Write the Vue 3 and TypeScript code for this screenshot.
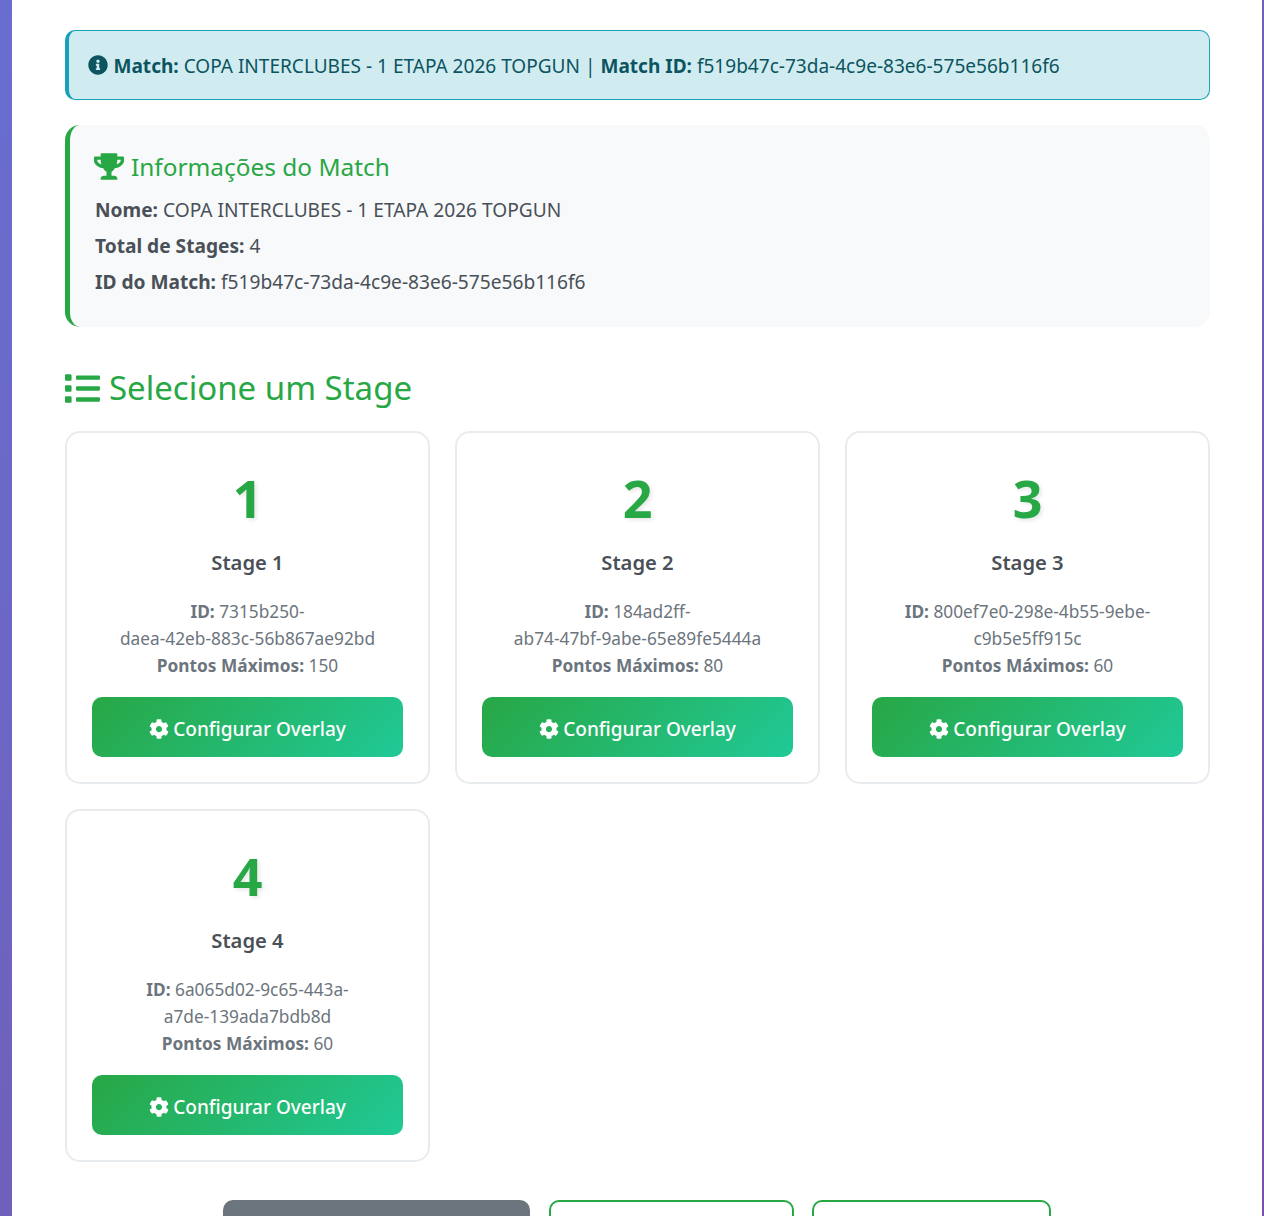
<script setup lang="ts">
interface Stage { n: number; idHead: string; idTail: string; pts: number }
const stages: Stage[] = [
  { n: 1, idHead: '7315b250-', idTail: 'daea-42eb-883c-56b867ae92bd', pts: 150 },
  { n: 2, idHead: '184ad2ff-', idTail: 'ab74-47bf-9abe-65e89fe5444a', pts: 80 },
  { n: 3, idHead: '800ef7e0-298e-4b55-9ebe-', idTail: 'c9b5e5ff915c', pts: 60 },
  { n: 4, idHead: '6a065d02-9c65-443a-', idTail: 'a7de-139ada7bdb8d', pts: 60 },
]
const cog = 'M487.4 315.7l-42.6-24.6c4.3-23.2 4.3-47 0-70.2l42.6-24.6c4.9-2.8 7.1-8.6 5.5-14-11.1-35.6-30-67.8-54.7-94.6-3.8-4.1-10-5.1-14.8-2.3L380.8 110c-17.9-15.4-38.5-27.3-60.8-35.1V25.8c0-5.6-3.9-10.5-9.4-11.7-36.7-8.2-74.3-7.8-109.2 0-5.5 1.2-9.4 6.1-9.4 11.7V75c-22.2 7.9-42.8 19.8-60.8 35.1L88.7 85.5c-4.9-2.8-11-1.9-14.8 2.3-24.7 26.7-43.6 58.9-54.7 94.6-1.7 5.4.6 11.2 5.5 14L67.3 221c-4.3 23.2-4.3 47 0 70.2l-42.6 24.6c-4.9 2.8-7.1 8.6-5.5 14 11.1 35.6 30 67.8 54.7 94.6 3.8 4.1 10 5.1 14.8 2.3l42.6-24.6c17.9 15.4 38.5 27.3 60.8 35.1v49.2c0 5.6 3.9 10.5 9.4 11.7 36.7 8.2 74.3 7.8 109.2 0 5.5-1.2 9.4-6.1 9.4-11.7v-49.2c22.2-7.9 42.8-19.8 60.8-35.1l42.6 24.6c4.9 2.8 11 1.9 14.8-2.3 24.7-26.7 43.6-58.9 54.7-94.6 1.5-5.5-.7-11.3-5.6-14.1zM256 336c-44.1 0-80-35.9-80-80s35.9-80 80-80 80 35.9 80 80-35.9 80-80 80z'
</script>

<template>
  <main class="container">
    <div class="alert">
      <svg class="ico-info" viewBox="0 0 512 512"><path fill="currentColor" d="M256 8C119.043 8 8 119.083 8 256c0 136.997 111.043 248 248 248s248-111.003 248-248C504 119.083 392.957 8 256 8zm0 110c23.196 0 42 18.804 42 42s-18.804 42-42 42-42-18.804-42-42 18.804-42 42-42zm56 254c0 6.627-5.373 12-12 12h-88c-6.627 0-12-5.373-12-12v-24c0-6.627 5.373-12 12-12h12v-64h-12c-6.627 0-12-5.373-12-12v-24c0-6.627 5.373-12 12-12h64c6.627 0 12 5.373 12 12v100h12c6.627 0 12 5.373 12 12v24z"/></svg>
      <span class="alert-text"><strong>Match:</strong> COPA INTERCLUBES - 1 ETAPA 2026 TOPGUN | <strong>Match ID:</strong> f519b47c-73da-4c9e-83e6-575e56b116f6</span>
    </div>

    <section class="info">
      <h3 class="info-title">
        <svg class="ico-trophy" viewBox="0 0 576 512"><path fill="currentColor" d="M552 64H448V24c0-13.3-10.7-24-24-24H152c-13.3 0-24 10.7-24 24v40H24C10.7 64 0 74.7 0 88v56c0 35.7 22.5 72.4 61.9 100.7 31.5 22.7 69.8 37.1 110 41.7C203.3 338.5 240 360 240 360v72h-48c-35.3 0-64 20.7-64 56v12c0 6.6 5.4 12 12 12h296c6.6 0 12-5.4 12-12v-12c0-35.3-28.7-56-64-56h-48v-72s36.7-21.5 68.1-73.6c40.3-4.6 78.6-19 110-41.7 39.3-28.3 61.9-65 61.9-100.7V88c0-13.3-10.7-24-24-24zM99.3 192.8C74.9 175.2 64 155.6 64 144v-16h64.2c1 32.6 5.8 61.2 12.8 86.2-15.1-5.2-29.2-12.4-41.7-21.4zM512 144c0 16.1-17.7 36.1-35.3 48.8-12.5 9-26.7 16.2-41.8 21.4 7-25 11.8-53.6 12.8-86.2H512v16z"/></svg>
        Informações do Match
      </h3>
      <p><strong>Nome:</strong> COPA INTERCLUBES - 1 ETAPA 2026 TOPGUN</p>
      <p><strong>Total de Stages:</strong> 4</p>
      <p><strong>ID do Match:</strong> f519b47c-73da-4c9e-83e6-575e56b116f6</p>
    </section>

    <h2 class="heading">
      <svg class="ico-list" viewBox="0 0 512 512"><path fill="currentColor" d="M80 368H16a16 16 0 0 0-16 16v64a16 16 0 0 0 16 16h64a16 16 0 0 0 16-16v-64a16 16 0 0 0-16-16zm0-320H16A16 16 0 0 0 0 64v64a16 16 0 0 0 16 16h64a16 16 0 0 0 16-16V64a16 16 0 0 0-16-16zm0 160H16a16 16 0 0 0-16 16v64a16 16 0 0 0 16 16h64a16 16 0 0 0 16-16v-64a16 16 0 0 0-16-16zm416 176H176a16 16 0 0 0-16 16v32a16 16 0 0 0 16 16h320a16 16 0 0 0 16-16v-32a16 16 0 0 0-16-16zm0-320H176a16 16 0 0 0-16 16v32a16 16 0 0 0 16 16h320a16 16 0 0 0 16-16V80a16 16 0 0 0-16-16zm0 160H176a16 16 0 0 0-16 16v32a16 16 0 0 0 16 16h320a16 16 0 0 0 16-16v-32a16 16 0 0 0-16-16z"/></svg>
      Selecione um Stage
    </h2>

    <div class="grid">
      <article v-for="s in stages" :key="s.n" class="card">
        <div class="num">{{ s.n }}</div>
        <h4 class="name">Stage {{ s.n }}</h4>
        <p class="meta">
          <strong>ID:</strong> {{ s.idHead }}<br />{{ s.idTail }}<br />
          <strong>Pontos Máximos:</strong> {{ s.pts }}
        </p>
        <button class="cfg" type="button">
          <svg class="ico-cog" viewBox="0 0 512 512"><path fill="currentColor" :d="cog" /></svg>
          Configurar Overlay
        </button>
      </article>
    </div>

    <div class="actions">
      <span class="act grey"></span>
      <span class="act outline w1"></span>
      <span class="act outline w2"></span>
    </div>
  </main>
</template>

<style>
html, body { margin: 0; height: 1216px; overflow: hidden; }
body { background: linear-gradient(135deg, #686ed0 0%, #7652a6 100%); }
</style>

<style scoped>
.container {
  box-sizing: border-box;
  width: 1250px;
  margin-left: 12px;
  padding: 30px 52px 0 53px;
  height: 1216px;
  overflow: hidden;
  background: #fff;
  font-family: "Noto Sans", "Open Sans", sans-serif;
  color: #495057;
}
.alert {
  box-sizing: border-box;
  height: 70px;
  display: flex;
  align-items: center;
  gap: 5.5px;
  padding-left: 19px;
  border: 1px solid #17a2b8;
  border-left-width: 4px;
  border-radius: 10px;
  background: #d1ecf1;
  color: #0c5460;
  font-size: 19.06px;
  white-space: nowrap;
}
.alert-text { padding-top: 2px; }
.ico-info { width: 20px; height: 20px; flex: none; }
.info {
  box-sizing: border-box;
  height: 202px;
  margin-top: 25px;
  padding: 25px 25px 0 25px;
  border-left: 5px solid #28a745;
  border-radius: 15px;
  background: #f8f9fa;
}
.info-title {
  margin: 0 0 8px;
  font-size: 24.4px;
  line-height: 34px;
  font-weight: 400;
  color: #28a745;
  display: flex;
  align-items: center;
  gap: 7px;
}
.ico-trophy { width: 30px; height: 27px; margin: 0 0 2px -1px; }
.info p { margin: 0; font-size: 19.15px; line-height: 36px; white-space: nowrap; }
.heading {
  margin: 40px 0 0;
  height: 42px;
  display: flex;
  align-items: center;
  gap: 9px;
  font-size: 33px;
  line-height: 42px;
  font-weight: 400;
  color: #28a745;
}
.ico-list { width: 35px; height: 35px; flex: none; }
.grid {
  margin-top: 22px;
  display: grid;
  grid-template-columns: repeat(3, 1fr);
  gap: 25px;
}
.card {
  box-sizing: border-box;
  height: 353px;
  padding: 25px;
  border: 2px solid #e9ecef;
  border-radius: 15px;
  background: #fff;
  text-align: center;
}
.num {
  margin-top: 7px;
  height: 65px;
  font-size: 52px;
  line-height: 65px;
  font-weight: 700;
  color: #28a745;
  text-shadow: 2px 2px 4px rgba(0, 0, 0, 0.1);
}
.name {
  margin: 17px 0 0;
  font-size: 20.2px;
  line-height: 30px;
  font-weight: 600;
  color: #495057;
}
.meta {
  margin: 21px 0 0;
  font-size: 17.3px;
  line-height: 27px;
  color: #6c757d;
}
.cfg {
  display: flex;
  width: 100%;
  height: 60px;
  margin-top: 18px;
  padding: 4px 0 0;
  align-items: center;
  justify-content: center;
  gap: 4px;
  border: 0;
  border-radius: 10px;
  background: linear-gradient(135deg, #28a745, #20c997);
  color: #fff;
  font-family: inherit;
  font-size: 19px;
  font-weight: 500;
}
.ico-cog { width: 20px; height: 20px; flex: none; }
.actions {
  margin-top: 38px;
  display: flex;
  justify-content: center;
  gap: 18.5px;
  padding-right: 1px;
}
.act { box-sizing: border-box; display: block; height: 60px; border-radius: 10px; }
.grey { width: 307px; background: #6c757d; }
.outline { border: 2px solid #28a745; background: #fff; }
.w1 { width: 245px; }
.w2 { width: 239px; }
</style>
